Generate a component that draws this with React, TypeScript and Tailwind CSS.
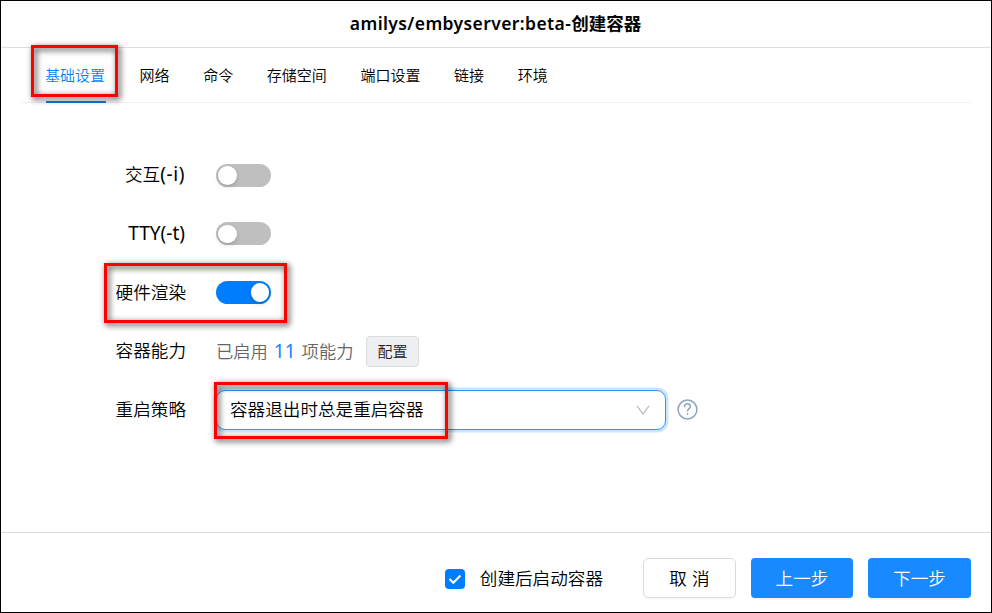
import type { ReactNode } from 'react';

const tabs = ['网络', '命令', '存储空间', '端口设置', '链接', '环境'];

function Highlight({ className }: { className: string }) {
  return (
    <div
      className={`pointer-events-none absolute border-[3px] border-[#ff0000] drop-shadow-[2px_2px_3px_rgba(0,0,0,0.85)] ${className}`}
    />
  );
}

function Switch({ on = false }: { on?: boolean }) {
  return (
    <span className={`flex h-[23px] w-[55px] items-center rounded-full px-[2px] ${on ? 'justify-end bg-[#007dfd]' : 'bg-[#bfbfbf]'}`}>
      <span className="size-[18.5px] rounded-full bg-white shadow-[0_2px_4px_rgba(0,35,11,0.2)]" />
    </span>
  );
}

function Row({ label, children, highlight }: { label: ReactNode; children: ReactNode; highlight?: string }) {
  return (
    <div className="relative flex h-[58.6px] items-center">
      <div className="mr-[30px] w-[185px] text-right whitespace-nowrap">{label}</div>
      {children}
      {highlight && <Highlight className={highlight} />}
    </div>
  );
}

export default function App() {
  return (
    <div className="flex h-[613px] w-[992px] flex-col overflow-hidden border border-black bg-white font-['Noto_Sans','Noto_Sans_CJK_SC',sans-serif] text-[17.6px] leading-[26px] font-[350] text-black">
      <header className="flex h-[47px] shrink-0 items-center justify-center border-b border-[#e0e0e0] pr-px pb-[2px] text-[17.5px] font-semibold">
        <h1>
          <span className="tracking-[0.4px]">amilys/embyserver:beta-</span>创建容器
        </h1>
      </header>

      <nav className="mx-5 flex h-[55px] shrink-0 gap-[33.6px] border-b border-[#f0f0f0] pl-[25px] text-[15px] leading-[54px]">
        <div className="relative h-[55px] w-[60px] border-b-2 border-[#0a7be8] text-[#0a7ffc]">
          <span className="-ml-px">基础设置</span>
          <Highlight className="-top-[3px] -left-[15px] h-[52px] w-[87px]" />
        </div>
        {tabs.map((tab) => (
          <div key={tab}>{tab}</div>
        ))}
      </nav>

      <main className="flex-1 pt-[43px]">
        <Row
          label={
            <span className="relative -top-px">
              交互<span className="mr-px text-[19px] font-normal tracking-[0.6px]">(-i)</span>
            </span>
          }
        >
          <Switch />
        </Row>
        <Row label={<span className="relative -top-px mr-px text-[19px] font-normal">TTY(-t)</span>}>
          <Switch />
        </Row>
        <Row label="硬件渲染" highlight="left-[103px] top-0 h-[60px] w-[183px]">
          <Switch on />
        </Row>
        <Row label={<span className="relative -top-px">容器能力</span>}>
          <span className="w-[137px] text-[17.3px] whitespace-nowrap text-[#666]">
            已启用<span className="mx-[6px] text-[19px] font-normal text-[#1684fc]">11</span>项能力
          </span>
          <button className="ml-[13px] h-[31px] w-[53px] rounded-[4px] border border-[#d9dbdd] bg-[#eeeff3] text-[15px] leading-[29px] text-[#222]">
            配置
          </button>
        </Row>
        <Row label={<span className="relative -top-px">重启策略</span>} highlight="left-[213px] top-[2px] h-[57px] w-[234px]">
          <div className="flex h-10 w-[450px] items-center justify-between rounded-[9px] border border-[#2795fa] pr-[15px] pl-[13px] shadow-[0_0_0_2.5px_#cbe5fd]">
            <span className="relative -top-px">容器退出时总是重启容器</span>
            <svg className="h-[10px] w-[14px]" viewBox="0 0 14 10" fill="none" stroke="#bfbfbf" strokeWidth="1.3">
              <path d="M1 .8 7 9 13 .8" />
            </svg>
          </div>
          <svg className="ml-[10.5px] size-[21px]" viewBox="0 0 21 21" fill="none" stroke="#8ca5be" strokeWidth="1.5">
            <circle cx="10.5" cy="10.5" r="9.4" />
            <path d="M7.6 8.2V7.4a2.9 2.7 0 0 1 5.8 0c0 2.4-2.9 2.2-2.9 5.1M10.5 14v1.8" />
          </svg>
        </Row>
      </main>

      <footer className="flex h-[80px] shrink-0 items-center justify-end border-t border-[#d9d9d9] pr-5 pt-[11px]">
        <div className="mr-10 flex items-center pt-px">
          <span className="mr-[15px] flex size-5 items-center justify-center rounded-[4px] bg-[#007dfd]">
            <svg className="size-[14px]" viewBox="0 0 14 14" fill="none" stroke="white" strokeWidth="2">
              <path d="m1.5 7 3.8 3.8 7.2-7.3" />
            </svg>
          </span>
          <span className="relative -top-px">创建后启动容器</span>
        </div>
        <button className="mr-[15px] h-10 w-[93px] rounded-[5px] border border-[#d9d9d9] shadow-[0_2px_0_rgba(0,0,0,0.02)]">
          <span className="tracking-[0.3px]">取 消</span>
        </button>
        <button className="mr-[15px] h-10 w-[102px] rounded-[4px] bg-[#1989ff] text-white shadow-[0_2px_0_rgba(0,0,0,0.04)]">上一步</button>
        <button className="h-10 w-[103px] rounded-[4px] bg-[#1989ff] text-white shadow-[0_2px_0_rgba(0,0,0,0.04)]">下一步</button>
      </footer>
    </div>
  );
}
